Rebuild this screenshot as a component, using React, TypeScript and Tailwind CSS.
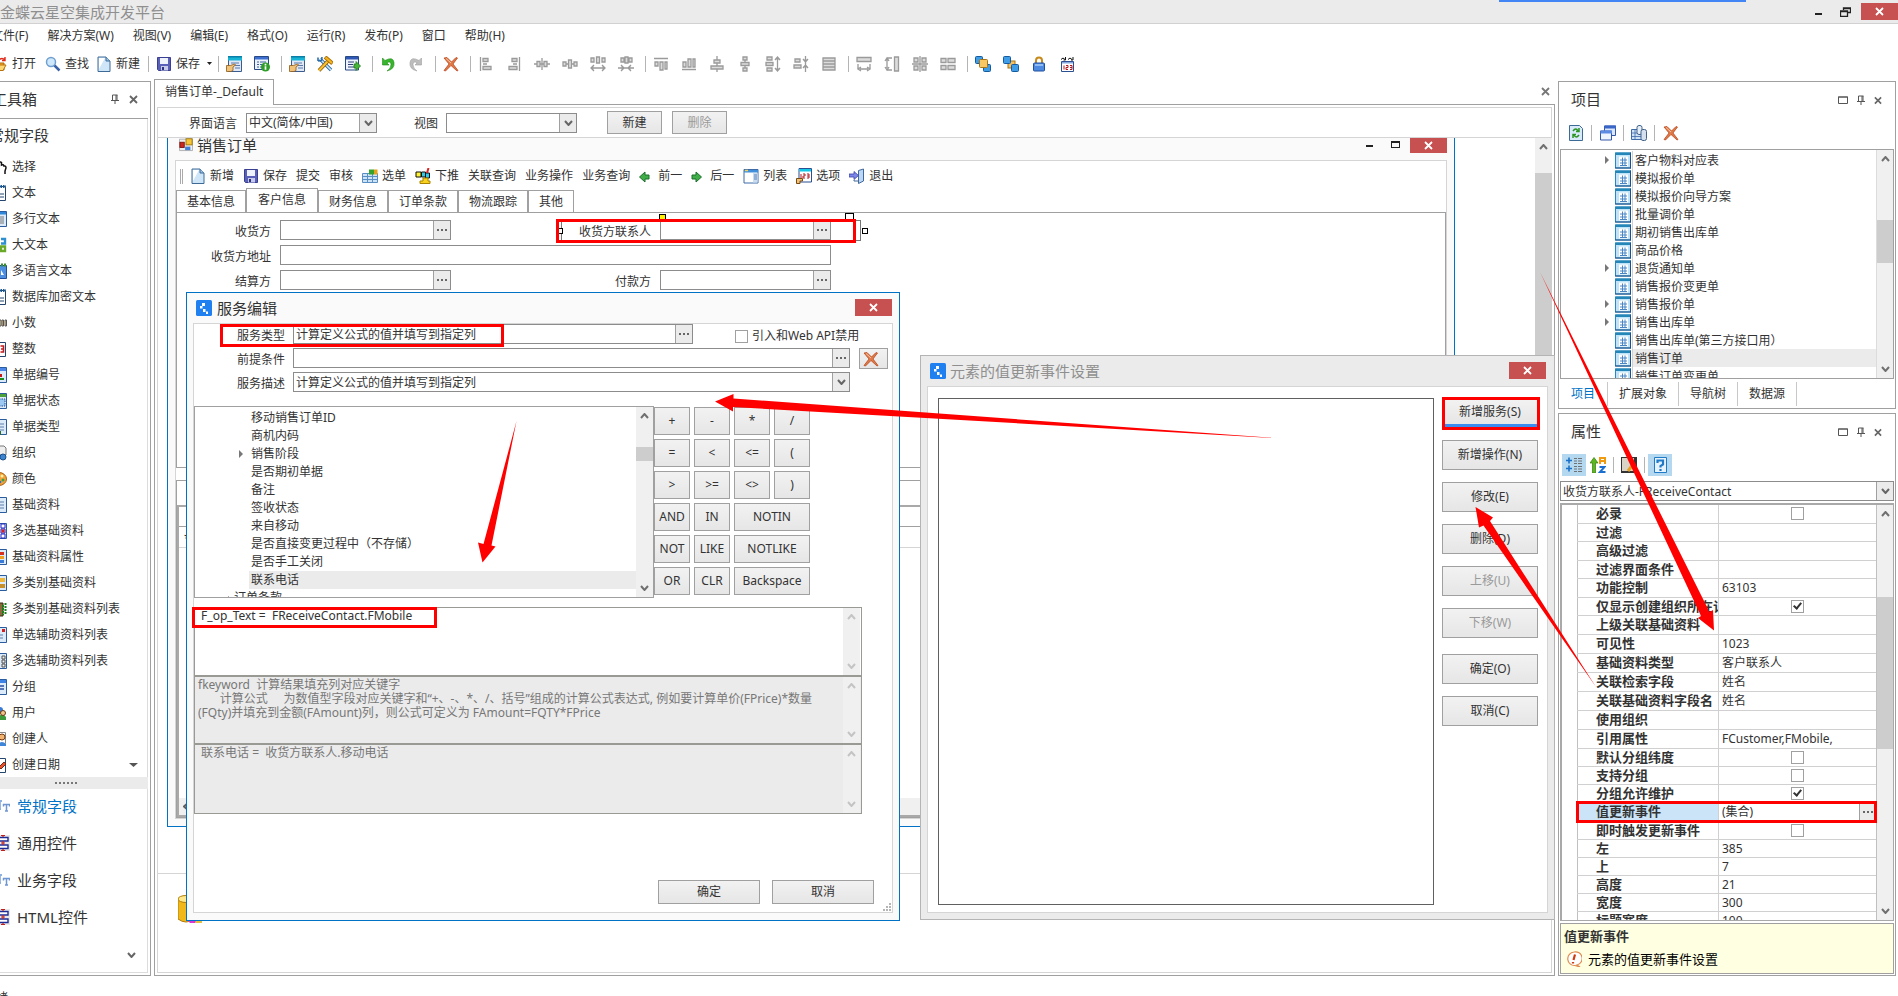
import * as React from "react"
import clsx from "clsx"

type IconProps = { className?: string }

function Svg({ className, children, box = "0 0 16 16" }: IconProps & { children: React.ReactNode; box?: string }) {
  return (
    <svg viewBox={box} className={clsx("shrink-0", className || "w-4 h-4")} aria-hidden="true">
      {children}
    </svg>
  )
}

/* ---------- icons ---------- */

const OpenIcon = () => (
  <Svg>
    <path d="M1 6h5l1 1h6v7H1z" fill="#f6a823" stroke="#a8660d" />
    <path d="M3 9h12l-3 5.500H1z" fill="#ffd873" stroke="#b8730f" />
    <path d="M8 4q3-3 6 0m0-3v3.500h-3" fill="none" stroke="#e02a1b" strokeWidth="1.400" />
  </Svg>
)
const FindIcon = () => (
  <Svg>
    <circle cx="6" cy="6" r="4.500" fill="#cfe8fb" stroke="#6f9fd0" strokeWidth="1.500" />
    <path d="M9.500 9.500l5 5" stroke="#3a62a8" strokeWidth="2.500" />
  </Svg>
)
const NewIcon = () => (
  <Svg>
    <path d="M2 1h8l4 4v10.500H2z" fill="#cfe5f8" stroke="#3e6a96" />
    <path d="M3 2h6l-6 11z" fill="#fff" />
    <path d="M10 1v4h4" fill="#9cc3e6" stroke="#3e6a96" />
  </Svg>
)
const SaveIcon = () => (
  <Svg>
    <path d="M1.500 1.500h13v13h-12l-1-1z" fill="#5a60b8" stroke="#3a3f90" />
    <path d="M4 2h8v6H4z" fill="#eef3fb" />
    <path d="M5 10h7v4.500H5z" fill="#c5cbe8" />
    <path d="M6 11h2v3H6z" fill="#2d3180" />
  </Svg>
)
const FormHandIcon = () => (
  <Svg>
    <path d="M2.500.5h13v15h-13z" fill="#dfe8f4" stroke="#3c5c90" />
    <path d="M2 0h14v4.500H2z" fill="#17b4d6" />
    <path d="M2 0h14v1.500H2z" fill="#0a7fa8" />
    <path d="M5 7h8M8 9.500h6M9 12h5" stroke="#5a7aac" />
    <path d="M.5 9.500h4l4-1.500 1 1-2.500 2v3.500l-2 1H.5z" fill="#f1c27a" stroke="#8a5a1a" strokeWidth=".8" />
  </Svg>
)
const FormInfoIcon = () => (
  <Svg>
    <path d="M.5.5h14v13H.5z" fill="#eef3fb" stroke="#274a86" />
    <path d="M1 1h13v2.500H1z" fill="#3c6fd0" />
    <path d="M3 6h2m1 0h6M3 8.500h2m1 0h4M3 11h2m1 0h3" stroke="#3a5f9c" />
    <circle cx="11.500" cy="11" r="4.500" fill="#2e9e28" />
    <path d="M11.500 7.800v1.600m0 .9v3.500" stroke="#fff" strokeWidth="1.700" />
  </Svg>
)
const ToolsIcon = () => (
  <Svg>
    <path d="M3 3l11 11" stroke="#2d6ea8" strokeWidth="3.400" />
    <path d="M3 3l11 11" stroke="#cfe8f8" strokeWidth="1.600" />
    <path d="M1 5V1.500M1 1.500M5 1L4.500 4.500 1 5" fill="none" stroke="#2d6ea8" strokeWidth="1.600" />
    <path d="M11.500 4.500L2 14.500" stroke="#8a5a0e" strokeWidth="3.600" />
    <path d="M11.500 4.500L2 14.500" stroke="#f9c22e" strokeWidth="2" />
    <path d="M8 1l7.500 6.500" stroke="#a8700a" strokeWidth="4" />
    <path d="M8.500 1.500l6.500 5.500" stroke="#f5b51f" strokeWidth="2.200" />
  </Svg>
)
const FormGoIcon = () => (
  <Svg>
    <path d="M.5.500h13v13.500H.5z" fill="#eef3fb" stroke="#274a86" />
    <path d="M1 1h12v2.500H1z" fill="#2f57b5" />
    <path d="M3 6h6M3 8.500h5M3 11h6" stroke="#2f3f7c" />
    <path d="M9 8h2V5.500l4.500 4.500-4.500 4.500V12H9z" fill="#45b53a" stroke="#1f7a1b" strokeWidth=".8" />
  </Svg>
)
const UndoIcon = () => (
  <Svg>
    <path d="M2.500 2v7H9L6.800 6.800Q11 4.500 11 8.500T7 15Q15 13 14 6.500T5 4.500z" fill="#37b52c" stroke="#1d8c16" strokeWidth=".6" />
  </Svg>
)
const RedoIcon = () => (
  <Svg>
    <path d="M13.500 2v7H7l2.200-2.200Q5 4.500 5 8.500T9 15Q1 13 2 6.500t9-2z" fill="#bdbdbd" stroke="#a0a0a0" strokeWidth=".6" />
  </Svg>
)
const DeleteIcon = () => (
  <Svg>
    <path d="M1 2l3-.5L8.500 6 13 1.500l1.500.5L10 8l5 6.500-1 .5L8 9.500 2.500 15 1 14.500 6 8z" fill="#e07a48" stroke="#b33c10" strokeWidth=".7" />
    <path d="M3 2.500l5 4.500" stroke="#f8c4a4" />
  </Svg>
)
const StackIcon = ({ back }: { back?: boolean }) => (
  <Svg>
    {back && <rect x="5" y="5" width="7" height="7" fill="#f5c262" stroke="#a97413" />}
    <rect x=".5" y=".5" width="7" height="7" rx="1" fill="#3f9de8" stroke="#155a9c" />
    <rect x="8.500" y="8.500" width="7" height="7" rx="1" fill="#3f9de8" stroke="#155a9c" />
    {!back && <rect x="4.500" y="3.500" width="8" height="8" rx="1" fill="#f8c766" stroke="#a97413" />}
  </Svg>
)
const LockIcon = () => (
  <Svg>
    <path d="M5 7V4.500q0-3 3-3t3 3V7" fill="none" stroke="#c68a1a" strokeWidth="2" />
    <rect x="2.500" y="7" width="11" height="8" rx="1" fill="#4c8be0" stroke="#1f4fa0" />
    <path d="M4 9h8" stroke="#a9ccf7" strokeWidth="1.500" />
  </Svg>
)
const OrderIcon = () => (
  <Svg>
    <path d="M2.500 5.500h12v10h-12z" fill="#fff" stroke="#2b4f92" />
    <path d="M3 6h11v1.500H3z" fill="#86a9de" />
    <path d="M2 3.500q2-3 4 0M9 3.500q2-3 4 0M6.500 1v3h-2M14 1v3h-2" fill="none" stroke="#111" />
    <path d="M5 9.500v4M7 9.500h2v2H7v2h2M11 9.500h2v4h-2m0-2h2" fill="none" stroke="#b4161b" />
  </Svg>
)

// greyed-out layout commands, one path per command
const layoutGlyphs: string[] = [
  "M2.500 1v14M5 2.500h5v3H5zM5 10.500h8v3H5zM5 8h4",
  "M13.500 1v14M6 2.500h5v3H6zM3 10.500h8v3H3zM7 8h4",
  "M3 5.500h3v5H3zM10 5.500h3v5h-3zM0 8h3M6 8h4M13 8h3M8 2v12",
  "M1 6h3v4H1zM6.500 4h3v8h-3zM12 6h3v4h-3zM4 8h2.500M9.500 8H12",
  "M1 2h3v4H1zM6.500 1h3v6h-3zM12 2h3v4h-3zM1 12h14M4 9l-3 3 3 3M12 9l3 3-3 3",
  "M3 2h3v4H3zM7 1h3v6H7zM11 2h3v4h-3zM0 12h16M3 9l3 3-3 3M13 9l-3 3 3 3",
]
const layoutGlyphs2: string[] = [
  "M1 2.500h14M2 6h3v4H2zM7 6h3v8H7zM12 6h2v7h-2z",
  "M1 13.500h14M2 6h3v5H2zM7 3h3v8H7zM12 3h2v8h-2z",
  "M5 4h6v3H5zM2 10h12v3H2zM8 0v4M8 7v3M8 13v3",
  "M6 1h4v3H6zM4 6.500h8v3H4zM6 12h4v3H6zM8 4v2.500M8 9.500V12",
  "M2 1h5v3H2zM1 6.500h7v3H1zM2 12h5v3H2zM12.500 1v14M10 4l2.500-3L15 4M10 12l2.500 3 2.500-3",
  "M2 3h5v3H2zM1 9h7v3H1zM12.500 0v16M10 3l2.500 3L15 3M10 12l2.500-3 2.500 3",
  "M2 2h12v12H2zM2 5h12M2 8h12M2 11h12",
]
const layoutGlyphs3: string[] = [
  "M1 1.500h14v4H1zM2 8v5M14 8v5M4 13h8M5 11l-3 2 3 2M11 11l3 2-3 2",
  "M10.500 1h4v14h-4zM3 2h5M3 14h5M3 4v8M1 5l2-3 2 3M1 11l2 3 2-3",
  "M2 2h4v4H2zM10 2h4v4h-4zM2 10h4v4H2zM10 10h4v4h-4zM8 0v16M0 8h16",
  "M1 2.500h5v4H1zM8 2.500h7v4H8zM1 9.500h5v4H1zM8 9.500h7v4H8z",
]
const GlyphIcon = ({ d }: { d: string }) => (
  <Svg>
    <path d={d} fill="#dcdcdc" stroke="#9a9a9a" strokeWidth="1.300" />
  </Svg>
)

const AppLogo = () => (
  <Svg>
    <rect width="16" height="16" rx="1.500" fill="#2080f0" />
    <path d="M6 3h3v3H6zM4 6h2.500v2.500H4zM7 9h2.500v3H7zM10 11.500h2V14h-2z" fill="#fff" />
  </Svg>
)
const WinFormIcon = () => (
  <Svg className="w-[14px] h-4">
    <path d="M.5 2.500h15v13H.5z" fill="#eee" stroke="#aaa" />
    <rect x="1" y="6" width="5" height="6" fill="#c8281e" stroke="#7c120c" />
    <rect x="8" y="2" width="7" height="7" fill="#f7c535" stroke="#96700a" />
    <rect x="7" y="11" width="6" height="4" fill="#4380d8" />
  </Svg>
)
const PickIcon = () => (
  <Svg>
    <path d="M.5 5.500h15v9H.5z" fill="#cfe3f7" stroke="#5a8fc4" />
    <path d="M.5 8.500h15M.5 11.500h15M5.500 5v9M10.500 5v9" stroke="#5a8fc4" />
    <rect x="7" y="1.500" width="5" height="5" fill="#34a32c" />
    <rect x="12" y="1.500" width="3.500" height="5" fill="#e3a31c" />
  </Svg>
)
const PushIcon = () => (
  <Svg>
    <path d="M1 4h5v5H1z" fill="#fff335" stroke="#111" />
    <path d="M6.500 4h4v5h-4zM10.500 5h4v5h-4z" fill="#35c8e8" stroke="#111" />
    <path d="M13.500 0l-1.500 5" stroke="#d22" strokeWidth="2" />
    <path d="M8 10h5v3h2v2.500H5V13h3z" fill="#f7d21f" stroke="#a88200" />
  </Svg>
)
const ArrowIcon = ({ right }: { right?: boolean }) => (
  <Svg className="w-[11px] h-4 mr-1" box="0 0 11 16">
    <path
      d={right ? "M1 7h4V4l5.500 5L5 14v-3H1z" : "M10 7H6V4L.5 9 6 14v-3h4z"}
      fill="#3fae49"
      stroke="#1c6e2a"
    />
  </Svg>
)
const ListIcon = () => (
  <Svg>
    <path d="M1 1.500h14v13.500H1z" fill="#fff" stroke="#3f6aa8" />
    <path d="M1 2h14v2.500H1z" fill="#3f8fdb" />
    <path d="M10 5h4.500v9.500H10z" fill="#c9dcf2" />
    <path d="M11 7h3M11 9h3M11 11h3" stroke="#5a82bb" />
    <path d="M2 2.500h3" stroke="#f8d24a" strokeWidth="1.500" />
  </Svg>
)
const OptionIcon = () => (
  <Svg>
    <path d="M3 .5h12.500V14H3z" fill="#fff" stroke="#2b4f92" />
    <path d="M3.500 1H15v2.500H3.500z" fill="#12c9e6" />
    <path d="M5 6v4M7 6h2v2H7v2h2M11 6h2v4h-2m0-2h2" fill="none" stroke="#b4161b" />
    <path d="M.5 10.500h6V13H4v2.500H.5z" fill="#f1c27a" stroke="#7a4a12" />
  </Svg>
)
const ExitIcon = () => (
  <Svg>
    <path d="M9.500 2.500l5-1.500v12l-5 2.500z" fill="#bcd7f3" stroke="#41689c" />
    <path d="M0 6h5V3.500L9.500 7.500 5 11.500V9H0z" fill="#7c86e8" stroke="#3942a8" strokeWidth=".8" />
    <path d="M9 13H5v-1" fill="none" stroke="#41689c" />
  </Svg>
)
const BillIcon = () => (
  <Svg className="w-4 h-[17px]">
    <path d="M.5.5h15v15H.5z" fill="#bfe3f8" stroke="#2a86bd" />
    <path d="M0 0h16v2.500H0z" fill="#2487b8" />
    <path d="M0 15.500h16M15.500 0v16" stroke="#1f4f86" />
    <path d="M4 4h9v10H4z" fill="#fff" />
    <path d="M5 7.500h7M5 10.500h7M5 13h7M7.500 5v8.500M10 5v8.500" stroke="#4a86c4" />
  </Svg>
)
const RefreshIcon = () => (
  <Svg>
    <path d="M1.500.5h10l3 3v12h-13z" fill="#d9ebfa" stroke="#3e6a96" />
    <path d="M5 6q3-4 5 0m1-3v3.500H8M11 10q-3 4-5 0m-1 3V9.500h3" fill="none" stroke="#2a9422" strokeWidth="1.500" />
  </Svg>
)
const WindowsIcon = () => (
  <Svg>
    <path d="M4.500 1h11v9.500h-11z" fill="#dce8fa" stroke="#3458a8" />
    <path d="M4.500.5h11.500v3H4.500z" fill="#3a66c8" />
    <path d="M.5 6h11v9H.5z" fill="#eef4fd" stroke="#3458a8" />
    <path d="M.5 5.500H12v3H.5z" fill="#5c8be4" />
  </Svg>
)
const DataIcon = () => (
  <Svg>
    <path d="M.5 4.500h10v10H.5z" fill="#cfe3f7" stroke="#3f6aa8" />
    <path d="M.5 8h10M.5 11.500h10M4 5v9" stroke="#3f6aa8" strokeWidth=".8" />
    <rect x="6" y=".5" width="5" height="9" rx="2" fill="#e6eef6" stroke="#41618a" />
    <rect x="10" y="4.500" width="5.500" height="11" rx="2" fill="#d4e0ee" stroke="#41618a" />
  </Svg>
)
const PinIcon = () => (
  <Svg className="w-[8px] h-[10px]" box="0 0 8 10">
    <path d="M1.500 1h5M1.500 1v5M6 1v5M5 1v5M0 6.500h8M4 6.500V10" fill="none" stroke="#555" />
  </Svg>
)
const SmallX = ({ className }: IconProps) => (
  <Svg className={className || "w-[9px] h-[9px]"} box="0 0 9 9">
    <path d="M1 1l7 7M8 1L1 8" stroke="currentColor" strokeWidth="1.800" />
  </Svg>
)
const BoxIcon = () => (
  <Svg className="w-[10px] h-[8px]" box="0 0 10 8">
    <path d="M.5 1h9v6.500h-9zM0 1h10" fill="none" stroke="#555" />
  </Svg>
)
const Chevron = ({ up, className }: IconProps & { up?: boolean }) => (
  <Svg className={clsx("w-[9px] h-[6px]", className)} box="0 0 9 6">
    <path d={up ? "M1 5l3.500-4L8 5" : "M1 1l3.500 4L8 1"} fill="none" stroke="currentColor" strokeWidth="2" />
  </Svg>
)

/* ---------- shared controls ---------- */

const face = "bg-linear-to-b from-[#f2f2f2] to-[#e6e6e6] border border-[#a0a0a0]"

function PushButton({ className, children, disabled }: { className?: string; children: React.ReactNode; disabled?: boolean }) {
  return (
    <button
      disabled={disabled}
      className={clsx("flex items-center justify-center", face, disabled && "text-[#9a9a9a]", className)}
    >
      {children}
    </button>
  )
}

function CloseButton({ className }: { className: string }) {
  return (
    <button aria-label="关闭" className={clsx("w-[37px] flex items-center justify-center bg-[#c75050] text-white", className)}>
      <SmallX />
    </button>
  )
}

function LookupInput({ id, value = "", className }: { id: string; value?: string; className?: string }) {
  return (
    <div className={clsx("flex h-5 border border-[#8c8c8c] bg-white", className)}>
      <input id={id} defaultValue={value} className="flex-1 min-w-0 px-[2px] pt-px outline-none" />
      <button aria-label="选择" className="w-[17px] flex items-center justify-center gap-[2px] bg-[#ebebeb] border-l border-[#a0a0a0]">
        <i className="size-[2px] bg-[#666]" />
        <i className="size-[2px] bg-[#666]" />
        <i className="size-[2px] bg-[#666]" />
      </button>
    </div>
  )
}

function DropDown({ id, value = "", className }: { id: string; value?: string; className?: string }) {
  return (
    <div className={clsx("relative h-5 border border-[#8c8c8c] bg-white", className)}>
      <select id={id} className="w-full h-full appearance-none pl-[2px] pr-5 pt-px leading-4 outline-none">
        <option>{value}</option>
      </select>
      <span className="absolute right-0 inset-y-0 w-[17px] flex items-center justify-center bg-[#ebebeb] border-l border-[#a0a0a0] text-[#666] pointer-events-none">
        <Chevron />
      </span>
    </div>
  )
}

function ScrollBar({ thumb, light, className }: { thumb?: string; light?: boolean; className?: string }) {
  return (
    <div
      className={clsx(
        "relative w-[17px] shrink-0 flex flex-col items-center justify-between py-[6px] bg-[#f0f0f0]",
        light ? "text-[#c4c4c4]" : "text-[#707070]",
        className
      )}
    >
      {thumb && <div className={clsx("absolute inset-x-0 bg-[#cdcdcd]", thumb)} />}
      <Chevron up />
      <Chevron />
    </div>
  )
}

const Sep = () => <span className="w-px h-4 -ml-px mr-[7px] bg-[#b4b4b4]" />

function IconButton({ label, children }: { label: string; children: React.ReactNode }) {
  return (
    <button aria-label={label} className="mr-3">
      {children}
    </button>
  )
}

/* ---------- top of the window ---------- */

const menus = ["文件(F)", "解决方案(W)", "视图(V)", "编辑(E)", "格式(O)", "运行(R)", "发布(P)", "窗口", "帮助(H)"]

function TitleBar() {
  return (
    <header className="h-6 shrink-0 flex justify-between bg-[#ebebeb] border-b border-[#d1d1d1]">
      <h1 className="text-[15px] leading-6 text-[#8f8f8f]">金蝶云星空集成开发平台</h1>
      <div className="absolute left-[79%] w-[247px] h-[2px] bg-[#4285f4]" />
      <div className="flex">
        <button aria-label="最小化" className="w-6 flex items-center justify-center">
          <i className="mt-1 w-[7px] h-[2px] bg-[#222]" />
        </button>
        <button aria-label="还原" className="w-[31px] flex items-center justify-center">
          <Svg className="w-[11px] h-[10px]" box="0 0 11 10">
            <path d="M3.500 3V1h7v4.500H8M3 1.500h8M.5 4h7v5.500h-7zM0 4.500h8" fill="none" stroke="#222" strokeWidth="1.300" />
          </Svg>
        </button>
        <CloseButton className="mt-[3px] h-[17px]" />
      </div>
    </header>
  )
}

function MainToolbar() {
  return (
    <div className="h-[31px] shrink-0 flex items-center -ml-[9px] overflow-hidden whitespace-nowrap">
      <button className="flex items-center gap-[5px] mr-[9px]"><OpenIcon />打开</button>
      <button className="flex items-center gap-[4px] mr-[7px]"><FindIcon />查找</button>
      <button className="flex items-center gap-[4px] mr-[9px]"><NewIcon />新建</button>
      <Sep />
      <button className="flex items-center gap-[4px] mr-3">
        <SaveIcon />保存
        <Svg className="ml-[3px] w-[5px] h-[3px]" box="0 0 5 3"><path d="M0 0h5L2.500 3z" fill="#222" /></Svg>
      </button>
      <span className="w-px h-4 -ml-[6px] mr-[7px] bg-[#b4b4b4]" />
      <IconButton label="表单"><FormHandIcon /></IconButton>
      <IconButton label="表单信息"><FormInfoIcon /></IconButton>
      <Sep />
      <IconButton label="属性"><FormHandIcon /></IconButton>
      <IconButton label="工具"><ToolsIcon /></IconButton>
      <IconButton label="导出"><FormGoIcon /></IconButton>
      <Sep />
      <IconButton label="撤销"><UndoIcon /></IconButton>
      <IconButton label="重做"><RedoIcon /></IconButton>
      <Sep />
      <IconButton label="删除"><DeleteIcon /></IconButton>
      <Sep />
      {layoutGlyphs.map((d) => <IconButton key={d} label="对齐"><GlyphIcon d={d} /></IconButton>)}
      <Sep />
      {layoutGlyphs2.map((d) => <IconButton key={d} label="间距"><GlyphIcon d={d} /></IconButton>)}
      <Sep />
      {layoutGlyphs3.map((d) => <IconButton key={d} label="尺寸"><GlyphIcon d={d} /></IconButton>)}
      <Sep />
      <IconButton label="置前"><StackIcon /></IconButton>
      <IconButton label="置后"><StackIcon back /></IconButton>
      <IconButton label="锁定"><LockIcon /></IconButton>
      <IconButton label="顺序"><OrderIcon /></IconButton>
    </div>
  )
}

/* ---------- left toolbox ---------- */

const page = <path d="M.5 1.500h14v14H.5z" fill="#fff" stroke="#24466e" />
const bluePage = <path d="M.5.5h15v15H.5z" fill="#dcebfa" stroke="#2a5c9e" />
const lines = <path d="M3 5h10M3 8h10M3 11h10" stroke="#5d7fa8" />

const toolItems: { name: string; icon: React.ReactNode }[] = [
  { name: "选择", icon: <path d="M7 15l-2-4V6.500Q6 5 8 6V3.500q1.500-1 2.500 0V6q2-1 2.500 1 2-.5 2 2l-1 3v3" fill="#fff" stroke="#111" strokeWidth="1.500" /> },
  { name: "文本", icon: <>{page}<path d="M2 1.500h13" stroke="#1c5a96" strokeWidth="3" strokeDasharray="1.500 1" /><path d="M3 9h10M3 12h10" stroke="#24466e" /></> },
  { name: "多行文本", icon: <>{bluePage}<path d="M1 1h14v2.500H1z" fill="#2f86d8" /><path d="M3 6h10M3 8h10M3 10h10M3 12h10" stroke="#777" /></> },
  { name: "大文本", icon: <><path d="M10 2h4v4.500h-4M14 4.500" fill="none" stroke="#2d8fd0" strokeWidth="2.400" /><path d="M10 9.500h4V14h-4z" fill="none" stroke="#6aa82a" strokeWidth="2.400" /></> },
  { name: "多语言文本", icon: <><path d="M.5 2.500h15v13H.5z" fill="#4f8fe0" stroke="#1f4f96" /><path d="M1 2h14" stroke="#3c8d2e" strokeWidth="3" strokeDasharray="2 1" /><path d="M10 12V7l3 5z" fill="#fff" /></> },
  { name: "数据库加密文本", icon: <>{page}<path d="M2 1.500h13" stroke="#1c5a96" strokeWidth="3" strokeDasharray="1.500 1" /><path d="M3 9h10M3 12h10" stroke="#24466e" /></> },
  { name: "小数", icon: <path d="M8 5h2v6H8zM11 5h1.500v6H11zM14 5h1.500v6H14z" fill="#f3d38a" stroke="#555" /> },
  { name: "整数", icon: <>{page}<path d="M9.500 5h3v3h-2.500M12.500 8v3H9.500" fill="none" stroke="#c01c1c" strokeWidth="1.600" /></> },
  { name: "单据编号", icon: <>{bluePage}<path d="M1 1h14v3H1z" fill="#4c86e6" /><path d="M9 7h2v3H9z" fill="#c81818" /><path d="M9 12h4" stroke="#1a8a1a" strokeWidth="2" /></> },
  { name: "单据状态", icon: <>{bluePage}<path d="M1 1h14v3H1z" fill="#4ca03a" /><path d="M8 6h6v7H8z" fill="#9cc8f4" stroke="#1f4f96" strokeDasharray="1.500 1" /></> },
  { name: "单据类型", icon: <>{bluePage}{lines}<path d="M7 12h3v4H7z" fill="#2c6b2c" /></> },
  { name: "组织", icon: <><path d="M8 1h5l2 2v7H8z" fill="#eee" stroke="#777" /><circle cx="12" cy="12" r="3" fill="#3d84d0" stroke="#1c4e8c" /></> },
  { name: "颜色", icon: <><ellipse cx="8" cy="8" rx="7.500" ry="6.500" fill="#f3a23a" stroke="#a8600e" /><circle cx="11" cy="5" r="1.500" fill="#fff2a8" /><circle cx="12" cy="9" r="1.500" fill="#3aa04a" /><circle cx="9" cy="11" r="1.300" fill="#2a6cd0" /></> },
  { name: "基础资料", icon: <>{bluePage}{lines}</> },
  { name: "多选基础资料", icon: <>{bluePage}<path d="M10 1h4v4h-4zM10 6h4v4h-4zM10 11h4v4h-4z" fill="#fff" stroke="#2626c8" /><path d="M10.500 6.500h3v3h-3z" fill="#d02020" /></> },
  { name: "基础资料属性", icon: <>{bluePage}<path d="M8 3h5v3H8z" fill="#d83020" /><path d="M8 7h5v3H8z" fill="#f0a020" /><path d="M8 11h5v3H8z" fill="#3a7bd8" /></> },
  { name: "多类别基础资料", icon: <>{bluePage}<path d="M9 3h5v4H9z" fill="#f0b83a" /><path d="M9 9h5v4H9z" fill="#c8902a" /></> },
  { name: "多类别基础资料列表", icon: <><path d="M7 2h5v13H7z" fill="#8a6a3a" stroke="#3a2a10" /><path d="M12 4v10M14.500 2v12" stroke="#18801c" strokeWidth="2" strokeDasharray="2 1" /></> },
  { name: "单选辅助资料列表", icon: <>{bluePage}<path d="M11 2h3v3h-3z" fill="#d02020" /><path d="M3 8h9M3 11h9" stroke="#5d7fa8" /></> },
  { name: "多选辅助资料列表", icon: <>{bluePage}<path d="M11 3h3v3h-3zM11 7h3v3h-3zM11 11h3v3h-3z" fill="#eee" stroke="#555" /></> },
  { name: "分组", icon: <>{bluePage}<path d="M1 1h14v3H1z" fill="#3d84e6" /><path d="M3 7h10M3 10h10" stroke="#2a4fa0" strokeWidth="1.500" /></> },
  { name: "用户", icon: <><circle cx="9" cy="5" r="3" fill="#3a7bd8" /><path d="M7 12q5-5 8 0v3H7z" fill="#3c9a3a" /><circle cx="12" cy="8" r="2.500" fill="#f1c48a" stroke="#6a3a12" /></> },
  { name: "创建人", icon: <><path d="M3.500 1.500h11v11h-11z" fill="#fff" stroke="#888" /><circle cx="11" cy="6" r="3" fill="#f2b470" stroke="#7a3a10" /><path d="M7 13q4-4 8 0v2H7z" fill="#3f86d8" /></> },
  { name: "创建日期", icon: <>{page}<path d="M8 10l5-5 2 2-5 5z" fill="#e8522a" stroke="#7a2a10" /></> },
]

const FieldIcon = () => (
  <Svg className="w-[18px] h-4" box="0 0 18 16">
    <path d="M4 3h6M8 3v8M7 11h2" stroke="#8fb1e0" strokeWidth="1.800" />
    <path d="M11 6.500h7M11.500 6v2.500M17.500 6v2.500M14.500 6v7M13 13h3" stroke="#6f96d0" strokeWidth="1.500" />
  </Svg>
)
const ControlIcon = () => (
  <Svg className="w-[18px] h-4" box="0 0 18 16">
    <path d="M0 0h18v16H0z" fill="#e8e8ec" />
    <path d="M4 2.500h12v3.500H4zM4 10h12v3.500H4z" fill="#fff" stroke="#1c2c94" strokeWidth="1.400" />
    <path d="M11 0v2M11 6v4M11 14v2M9 8h4M9 .5h4M9 15.500h4" stroke="#c02020" strokeWidth="1.200" />
  </Svg>
)

const toolGroups = [
  { name: "常规字段", icon: <FieldIcon />, active: true },
  { name: "通用控件", icon: <ControlIcon /> },
  { name: "业务字段", icon: <FieldIcon /> },
  { name: "HTML控件", icon: <ControlIcon /> },
]

function Toolbox() {
  return (
    <aside className="w-[151px] shrink-0 mt-[2px] flex flex-col border border-l-0 border-[#a0a0a0] overflow-hidden pr-[2px] pb-[2px]">
      <div className="h-[37px] shrink-0 flex items-center pb-[2px] border-b border-[#a0a0a0]">
        <h2 className="-ml-2 text-[15px] flex-1">工具箱</h2>
        <PinIcon />
        <button aria-label="关闭工具箱" className="ml-[10px] mr-[10px] text-[#666]"><SmallX /></button>
      </div>
      <div className="border-r border-[#dcdcdc]">
        <h3 className="h-[34px] -ml-[11px] text-[15px] leading-8">常规字段</h3>
        <ul>
          {toolItems.map((item, i) => (
            <li key={item.name} className="h-[26px] flex items-center gap-[5px] pt-[2px] -ml-[9px]">
              <Svg>{item.icon}</Svg>
              <span className="flex-1">{item.name}</span>
              {i === toolItems.length - 1 && (
                <Svg className="w-[9px] h-[4px] mr-[9px]" box="0 0 9 4"><path d="M0 0h9L4.500 4z" fill="#555" /></Svg>
              )}
            </li>
          ))}
        </ul>
      </div>
      <div className="h-3 shrink-0 flex items-center justify-center gap-[2px] pr-4 bg-[#ebebeb]">
        {[0, 1, 2, 3, 4, 5].map((n) => <i key={n} className="size-[2px] bg-[#777]" />)}
      </div>
      <div className="flex-1 border-r border-b border-[#dcdcdc]">
        {toolGroups.map((g) => (
          <button
            key={g.name}
            className={clsx("h-[37px] w-full -ml-2 pb-[3px] flex items-center gap-[7px] text-[15px]", g.active && "text-[#0072c6]")}
          >
            {g.icon}
            {g.name}
          </button>
        ))}
        <div className="flex justify-end pr-[11px] pt-[15px] text-[#666]"><Chevron /></div>
      </div>
    </aside>
  )
}

/* ---------- designer in the middle ---------- */

const formTabs = ["基本信息", "客户信息", "财务信息", "订单条款", "物流跟踪", "其他"]

const formTools: { name: string; icon?: React.ReactNode }[] = [
  { name: "新增", icon: <NewIcon /> },
  { name: "保存", icon: <SaveIcon /> },
  { name: "提交" },
  { name: "审核" },
  { name: "选单", icon: <PickIcon /> },
  { name: "下推", icon: <PushIcon /> },
  { name: "关联查询" },
  { name: "业务操作" },
  { name: "业务查询" },
  { name: "前一", icon: <ArrowIcon /> },
  { name: "后一", icon: <ArrowIcon right /> },
  { name: "列表", icon: <ListIcon /> },
  { name: "选项", icon: <OptionIcon /> },
  { name: "退出", icon: <ExitIcon /> },
]

function FormLabel({ htmlFor, children }: { htmlFor: string; children: React.ReactNode }) {
  return <label htmlFor={htmlFor} className="text-right leading-6 h-5">{children}</label>
}

function SalesOrderForm() {
  return (
    <section className="flex-1 min-w-0 ml-[9px] mr-20 mb-[46px] flex flex-col px-[7px] pb-[7px] bg-[#fafafa] border border-t-0 border-[#0072c6]">
      <div className="h-[22px] shrink-0 flex items-start">
        <span className="ml-1 mr-[4px] -mt-[2px]"><WinFormIcon /></span>
        <h2 className="flex-1 text-[15px] leading-[14px]">销售订单</h2>
        <button aria-label="最小化" className="mt-[7px] mr-[18px]"><i className="block w-[7px] h-[2px] bg-[#222]" /></button>
        <button aria-label="最大化" className="mt-[3px] mr-[10px] w-[9px] h-[7px] border border-t-2 border-[#222]" />
        <CloseButton className="h-[15px]" />
      </div>
      <div className="flex-1 flex flex-col bg-white border border-[#d5d5d5]">
        <div className="h-[27px] shrink-0 flex items-center gap-[9px] pl-1 pt-[3px] whitespace-nowrap">
          <span className="w-[3px] h-[15px] mr-[-2px] border-x border-[#aaa]" />
          {formTools.map((t) => (
            <button key={t.name} className="flex items-center gap-[4px]">{t.icon}{t.name}</button>
          ))}
        </div>
        <div className="h-6 shrink-0 flex items-end" role="tablist">
          {formTabs.map((t) => (
            <button
              key={t}
              role="tab"
              className={clsx(
                "border border-b-0 border-[#a0a0a0]",
                t === "客户信息" ? "h-[25px] -mb-px px-[11px] pb-[3px] bg-white" : "h-[22px] px-[10px]"
              )}
            >
              {t}
            </button>
          ))}
        </div>
        <div className="h-[256px] shrink-0 pt-[7px] border border-[#a0a0a0]">
          <div className="relative grid grid-cols-[94px_171px_191px_171px] auto-rows-[20px] gap-x-[9px] gap-y-[5px]">
            <FormLabel htmlFor="receiver">收货方</FormLabel>
            <LookupInput id="receiver" />
            <FormLabel htmlFor="contact">收货方联系人</FormLabel>
            <LookupInput id="contact" />
            <FormLabel htmlFor="address">收货方地址</FormLabel>
            <input id="address" className="col-span-3 border border-[#8c8c8c] outline-none" />
            <FormLabel htmlFor="settle">结算方</FormLabel>
            <LookupInput id="settle" />
            <FormLabel htmlFor="payer">付款方</FormLabel>
            <LookupInput id="payer" />
            {/* selection frame with its grips */}
            <div className="absolute left-[384px] top-0 w-[300px] h-[21px] border border-[#777]">
              <i className="absolute -left-[5px] top-[7px] size-[6px] border border-black bg-white" />
              <i className="absolute left-[97px] -top-[7px] size-[7px] border border-black bg-[#ffef00]" />
              <i className="absolute right-[6px] -top-[8px] size-[9px] border border-black bg-white" />
              <i className="absolute -right-[8px] top-[7px] size-[6px] border border-black bg-white" />
            </div>
          </div>
        </div>
        <div className="mt-3 flex-1 flex flex-col border border-[#a0a0a0]">
          <div className="h-6 shrink-0" />
          <div className="flex-1 flex flex-col border-2 border-[#a9a9a9]">
            <div className="h-5 border-b border-[#a0a0a0]" />
            <div className="h-[21px] pl-[5px] border-b border-[#d5d5d5] leading-6">*</div>
            <div className="mt-auto h-[17px] flex items-center bg-[#f0f0f0] pl-1 text-[#606060]">
              <Svg className="w-[6px] h-[9px]" box="0 0 6 9"><path d="M5 1L1 4.500 5 8" fill="none" stroke="currentColor" strokeWidth="2" /></Svg>
            </div>
          </div>
        </div>
      </div>
    </section>
  )
}

function Designer() {
  return (
    <main className="flex-1 min-w-0 flex flex-col">
      <div className="h-[25px] shrink-0 flex items-center">
        <button className="h-[26px] -mb-px px-[10px] pb-px bg-white border border-b-0 border-[#a0a0a0] relative">销售订单-_Default</button>
        <button aria-label="关闭页签" className="ml-auto mr-[5px] text-[#777]"><SmallX /></button>
      </div>
      <div className="flex-1 min-h-0 flex flex-col p-[2px] border border-[#a0a0a0]">
        <div className="h-[31px] shrink-0 flex items-center border border-[#d5d5d5] pl-[31px]">
          <label htmlFor="lang" className="mr-[9px] pt-[2px]">界面语言</label>
          <DropDown id="lang" value="中文(简体/中国)" className="w-[131px]" />
          <label htmlFor="view" className="ml-[37px] mr-[8px] pt-[2px]">视图</label>
          <DropDown id="view" className="w-[131px]" />
          <PushButton className="ml-[30px] w-[55px] h-[23px]">新建</PushButton>
          <PushButton disabled className="ml-[10px] w-[55px] h-[23px]">删除</PushButton>
        </div>
        <div className="flex-1 min-h-0 flex border-l border-[#d5d5d5]">
          <SalesOrderForm />
          <ScrollBar thumb="top-[35px] bottom-[17px]" className="w-4" />
        </div>
        <div className="h-[100px] shrink-0 border border-[#d5d5d5] pl-[20px] pt-[21px]">
          <Svg className="w-6 h-7" box="0 0 24 28">
            <path d="M0 4v20q8 6 16 0V4z" fill="#f0b818" stroke="#b07c08" />
            <ellipse cx="8" cy="4" rx="8" ry="3.500" fill="#ffe98a" stroke="#b07c08" />
            <path d="M8 24l6-6 7 7-4 3h-5z" fill="#d838d8" />
            <path d="M19 22h5v6h-7z" fill="#e8c040" />
          </Svg>
        </div>
      </div>
    </main>
  )
}

/* ---------- right docks ---------- */

const projectNodes: { name: string; more?: boolean; selected?: boolean }[] = [
  { name: "客户物料对应表", more: true },
  { name: "模拟报价单" },
  { name: "模拟报价向导方案" },
  { name: "批量调价单" },
  { name: "期初销售出库单" },
  { name: "商品价格" },
  { name: "退货通知单", more: true },
  { name: "销售报价变更单" },
  { name: "销售报价单", more: true },
  { name: "销售出库单", more: true },
  { name: "销售出库单(第三方接口用）" },
  { name: "销售订单", selected: true },
  { name: "销售订单变更单" },
]

const Triangle = () => (
  <Svg className="w-[4px] h-[8px]" box="0 0 4 8"><path d="M0 0l4 4-4 4z" fill="#777" /></Svg>
)

function DockHeader({ title }: { title: string }) {
  return (
    <div className="h-9 shrink-0 flex items-center pl-[11px] pr-3 pb-[2px]">
      <h2 className="flex-1 text-[15px]">{title}</h2>
      <span className="flex items-center gap-[9px] pt-[2px] text-[#666]">
        <BoxIcon />
        <PinIcon />
        <button aria-label={"关闭" + title}><SmallX className="w-[8px] h-[9px]" /></button>
      </span>
    </div>
  )
}

function ProjectDock() {
  return (
    <section className="h-[328px] shrink-0 flex flex-col border border-[#a0a0a0] px-px">
      <DockHeader title="项目" />
      <div className="h-[31px] shrink-0 flex items-center pl-2 pb-px">
        <IconButton label="刷新"><RefreshIcon /></IconButton>
        <span className="w-px h-4 -ml-[5px] mr-2 bg-[#b4b4b4]" />
        <IconButton label="窗口"><WindowsIcon /></IconButton>
        <span className="w-px h-4 -ml-[5px] mr-[7px] bg-[#b4b4b4]" />
        <IconButton label="数据"><DataIcon /></IconButton>
        <span className="w-px h-4 -ml-[5px] mr-2 bg-[#b4b4b4]" />
        <IconButton label="移除"><DeleteIcon /></IconButton>
      </div>
      <div className="flex-1 min-h-0 flex border border-[#a0a0a0]">
        <ul className="flex-1 min-w-0 pt-px overflow-hidden">
          {projectNodes.map((n) => (
            <li key={n.name} className="h-[18px] flex items-center">
              <span className="w-[54px] pl-[44px]">{n.more && <Triangle />}</span>
              <BillIcon />
              <span className={clsx("flex-1 h-[18px] leading-[19px] ml-px pl-[2px] border-l border-[#d0d0d0]", n.selected && "bg-[#ebebeb]")}>
                {n.name}
              </span>
            </li>
          ))}
        </ul>
        <ScrollBar thumb="top-[70px] h-[43px]" className="border-l border-[#dcdcdc]" />
      </div>
      <div className="h-[29px] shrink-0 flex items-start pt-[3px]" role="tablist">
        {["项目", "扩展对象", "导航树", "数据源"].map((t) => (
          <button
            key={t}
            role="tab"
            className={clsx("h-6 px-[11px] border-r border-[#c8c8c8]", t === "项目" && "pr-3 text-[#0072c6]")}
          >
            {t}
          </button>
        ))}
      </div>
    </section>
  )
}

type Prop = { name: string; value?: string; check?: boolean; tall?: boolean; selected?: boolean }

const properties: Prop[] = [
  { name: "必录", check: false },
  { name: "过滤" },
  { name: "高级过滤", tall: true },
  { name: "过滤界面条件" },
  { name: "功能控制", value: "63103", tall: true },
  { name: "仅显示创建组织所在记录", check: true },
  { name: "上级关联基础资料", tall: true },
  { name: "可见性", value: "1023", tall: true },
  { name: "基础资料类型", value: "客户联系人", tall: true },
  { name: "关联检索字段", value: "姓名", tall: true },
  { name: "关联基础资料字段名", value: "姓名", tall: true },
  { name: "使用组织", tall: true },
  { name: "引用属性", value: "FCustomer,FMobile,", tall: true },
  { name: "默认分组纬度", check: false },
  { name: "支持分组", check: false },
  { name: "分组允许维护", check: true },
  { name: "值更新事件", value: "(集合)", tall: true, selected: true },
  { name: "即时触发更新事件", check: false },
  { name: "左", value: "385" },
  { name: "上", value: "7" },
  { name: "高度", value: "21" },
  { name: "宽度", value: "300" },
  { name: "标题宽度", value: "100" },
]

const checkBox =
  "block size-[13px] appearance-none border border-[#a0a0a0] bg-white relative checked:after:absolute checked:after:left-[3px] checked:after:top-0 checked:after:w-[5px] checked:after:h-[8px] checked:after:border-r-2 checked:after:border-b-2 checked:after:border-[#333] checked:after:rotate-40"

function PropertyGrid() {
  return (
    <div className="flex-1 min-h-0 flex mt-[2px] border-2 border-[#a9a9a9] border-r border-b">
      <div className="flex-1 min-w-0 overflow-hidden pl-[15px]">
        <table className="w-full table-fixed border-collapse border-l border-[#c0c0c0]">
          <tbody>
            {properties.map((p) => (
              <tr key={p.name} className={clsx("border-b border-[#d0d0d0]", p.tall ? "h-[19px]" : "h-[18px]")}>
                <th
                  scope="row"
                  className={clsx(
                    "w-[141px] p-0 pl-[18px] text-left text-[13px] leading-[17px] font-bold whitespace-nowrap overflow-hidden border-r border-[#d0d0d0]",
                    p.selected && "bg-[#cce4f7]"
                  )}
                >
                  {p.name}
                </th>
                <td className="p-0 pl-[3px] leading-[17px]">
                  {p.check !== undefined && (
                    <input type="checkbox" aria-label={p.name} defaultChecked={p.check} className={clsx(checkBox, "ml-[69px]")} />
                  )}
                  {p.selected ? (
                    <span className="flex justify-between">
                      {p.value}
                      <button aria-label="编辑" className="w-[17px] flex items-center justify-center gap-[2px] bg-[#ebebeb] border-l border-[#a0a0a0]">
                        <i className="size-[2px] bg-[#666]" />
                        <i className="size-[2px] bg-[#666]" />
                        <i className="size-[2px] bg-[#666]" />
                      </button>
                    </span>
                  ) : (
                    p.value
                  )}
                </td>
              </tr>
            ))}
          </tbody>
        </table>
      </div>
      <ScrollBar thumb="top-[92px] h-[152px]" className="border-l border-[#c0c0c0]" />
    </div>
  )
}

function PropertyDock() {
  return (
    <section className="flex-1 min-h-0 mt-1 flex flex-col border border-[#a0a0a0] p-px pt-0">
      <DockHeader title="属性" />
      <div className="h-[31px] shrink-0 flex items-center pl-[2px] pb-px">
        <button aria-label="分类" className="w-6 h-[22px] flex items-center justify-center bg-[#b4d8f0]">
          <Svg>
            <path d="M0 3.500h6M3 .5v6M0 11.500h6M3 8.500v6" stroke="#1a73c8" strokeWidth="1.600" />
            <path d="M8 1.500h3M12 1.500h4M8 4h3M12 4h4M8 6.500h3M12 6.500h4M8 9.500h3M12 9.500h4M8 12h3M12 12h4M8 14.500h3M12 14.500h4" stroke="#666" strokeWidth=".9" />
          </Svg>
        </button>
        <button aria-label="排序" className="ml-1">
          <Svg>
            <path d="M2.500 16V6H0l4-5.500L8 6H5.500v10z" fill="#5cb81e" stroke="#347c0a" strokeWidth=".7" />
            <path d="M10 7V1h5v6M10 4h5" fill="none" stroke="#f09a10" strokeWidth="2" />
            <path d="M9.500 10h5l-4.500 5h5.500" fill="none" stroke="#1a6fd0" strokeWidth="2" />
          </Svg>
        </button>
        <span className="w-px h-4 mx-[7px] bg-[#b4b4b4]" />
        <button aria-label="属性页">
          <Svg>
            <path d="M0 0h16v16H0z" fill="#333" />
            <path d="M1 1h12v13H1z" fill="#d9d4c6" />
            <path d="M7 14l6-8" stroke="#e8a020" strokeWidth="3" />
          </Svg>
        </button>
        <span className="w-px h-4 ml-[7px] mr-[3px] bg-[#b4b4b4]" />
        <button aria-label="说明" className="w-6 h-[22px] flex items-center justify-center bg-[#b4d8f0]">
          <Svg>
            <path d="M2.500.5h12v15h-12z" fill="#e6f3fd" stroke="#1f7ac8" />
            <path d="M5.500 6V3.500h5.500v4L8.500 9v1.500M8.500 12v2" fill="none" stroke="#1f7ac8" strokeWidth="2.200" />
          </Svg>
        </button>
      </div>
      <DropDown id="element" value="收货方联系人-FReceiveContact" className="shrink-0" />
      <PropertyGrid />
      <div className="h-[51px] shrink-0 mt-[2px] flex flex-col justify-around px-[3px] pb-[3px] bg-[#ffffe1] border border-[#a0a0a0] text-[13px]">
        <h3 className="font-bold leading-5">值更新事件</h3>
        <p className="flex items-center gap-[6px] pl-[2px] leading-5 text-black">
          <Svg>
            <path d="M8 1a6.500 6.500 0 1 1 3 13l3 2-5-1.500A6.500 6.500 0 0 1 8 1z" fill="#fff" stroke="#e08a50" strokeWidth="1.200" />
            <path d="M9 3.500L7.500 9M7 11v1.500" stroke="#d03a10" strokeWidth="2.200" />
          </Svg>
          元素的值更新事件设置
        </p>
      </div>
    </section>
  )
}

/* ---------- dialogs ---------- */

const treeFields = ["移动销售订单ID", "商机内码", "销售阶段", "是否期初单据", "备注", "签收状态", "来自移动", "是否直接变更过程中（不存储）", "是否手工关闭", "联系电话"]

const operators: [string, boolean?][] = [
  ["+"], ["-"], ["*"], ["/"],
  ["="], ["<"], ["<="], ["("],
  [">"], [">="], ["<>"], [")"],
  ["AND"], ["IN"], ["NOTIN", true],
  ["NOT"], ["LIKE"], ["NOTLIKE", true],
  ["OR"], ["CLR"], ["Backspace", true],
]

const helpText =
  "fkeyword  计算结果填充列对应关键字\n       计算公式     为数值型字段对应关键字和“+、-、*、/、括号”组成的计算公式表达式, 例如要计算单价(FPrice)*数量\n(FQty)并填充到金额(FAmount)列，则公式可定义为 FAmount=FQTY*FPrice"

function FormulaBox({ label, value, dim, className }: { label: string; value: string; dim?: boolean; className: string }) {
  return (
    <div className={clsx("w-[668px] shrink-0 flex pr-px border border-[#9a9a94]", dim ? "bg-[#ebebeb] text-[#777]" : "bg-white", className)}>
      <textarea
        aria-label={label}
        wrap="off"
        defaultValue={value}
        className="flex-1 min-w-0 resize-none overflow-hidden px-[3px] pt-px leading-[14px] outline-none"
      />
      <ScrollBar light />
    </div>
  )
}

function ServiceEditDialog() {
  return (
    <section role="dialog" aria-label="服务编辑" className="absolute left-[186px] top-[292px] w-[714px] h-[629px] flex flex-col px-[6px] pb-[7px] bg-[#fafafa] border border-[#0072c6]">
      <div className="h-[30px] shrink-0 flex items-center pl-[3px]">
        <AppLogo />
        <h2 className="flex-1 ml-[5px] text-[15px]">服务编辑</h2>
        <CloseButton className="h-[17px] mb-[2px] mr-px" />
      </div>
      <div className="relative flex-1 min-h-0 flex flex-col bg-white border border-[#d5d5d5]">
        <div className="grid grid-cols-[99px_1fr] gap-y-1 auto-rows-[20px]">
          <label htmlFor="svcType" className="pl-[43px] leading-6">服务类型</label>
          <div className="flex items-center">
            <LookupInput id="svcType" value="计算定义公式的值并填写到指定列" className="w-[400px]" />
            <label className="ml-[42px] flex items-center gap-[4px] pt-[4px]">
              <input type="checkbox" className={checkBox} />
              引入和Web API禁用
            </label>
          </div>
          <label htmlFor="svcCond" className="pl-[43px] leading-6">前提条件</label>
          <div className="flex items-start">
            <LookupInput id="svcCond" className="w-[557px]" />
            <button aria-label="清除" className={clsx("ml-[9px] w-[29px] h-[21px] flex items-center pl-[3px]", face)}>
              <DeleteIcon />
            </button>
          </div>
          <label htmlFor="svcDesc" className="pl-[43px] leading-6">服务描述</label>
          <DropDown id="svcDesc" value="计算定义公式的值并填写到指定列" className="w-[557px]" />
        </div>
        <div className="mt-[14px] flex">
          <div className="w-[460px] h-[192px] flex border border-[#a0a0a0]">
            <ul className="flex-1 min-w-0 overflow-hidden pt-[2px]">
              {treeFields.map((f) => (
                <li key={f} className="h-[18px] flex items-center pl-[44px]">
                  <span className="w-[10px]">{f === "销售阶段" && <Triangle />}</span>
                  <span className={clsx("flex-1 pl-[2px] leading-[18px]", f === "联系电话" && "bg-[#ebebeb]")}>{f}</span>
                </li>
              ))}
              <li className="h-[18px] flex items-center pl-[29px] gap-[5px]">
                <Svg className="w-[5px] h-[5px]" box="0 0 5 5"><path d="M5 0v5H0z" fill="#555" /></Svg>
                订单条款
              </li>
            </ul>
            <ScrollBar thumb="top-[40px] h-[14px]" />
          </div>
          <div className="grid grid-cols-[36px_36px_36px_36px] auto-rows-[28px] gap-[4px] pt-px">
            {operators.map(([op, wide]) => (
              <PushButton key={op} className={wide ? "col-span-2" : ""}>{op}</PushButton>
            ))}
          </div>
        </div>
        <div className="mt-[9px] flex flex-col">
          <FormulaBox label="公式" value=" F_op_Text =  FReceiveContact.FMobile" className="h-[69px]" />
          <FormulaBox label="说明" value={helpText} dim className="h-[68px]" />
          <FormulaBox label="翻译" value=" 联系电话 =  收货方联系人.移动电话" dim className="h-[70px]" />
        </div>
        <div className="mt-auto mb-2 mr-[18px] flex justify-end gap-3">
          <PushButton className="w-[102px] h-6">确定</PushButton>
          <PushButton className="w-[102px] h-6">取消</PushButton>
        </div>
        <Svg className="absolute right-0 bottom-0 w-[9px] h-[9px]" box="0 0 9 9">
          <path d="M6 0h2v2H6zM3 3h2v2H3zM6 3h2v2H6zM0 6h2v2H0zM3 6h2v2H3zM6 6h2v2H6z" fill="#b5b5b5" />
        </Svg>
      </div>
    </section>
  )
}

const eventButtons: { name: string; disabled?: boolean }[] = [
  { name: "新增服务(S)" },
  { name: "新增操作(N)" },
  { name: "修改(E)" },
  { name: "删除(D)" },
  { name: "上移(U)", disabled: true },
  { name: "下移(W)", disabled: true },
  { name: "确定(O)" },
  { name: "取消(C)" },
]

function UpdateEventDialog() {
  return (
    <section role="dialog" aria-label="元素的值更新事件设置" className="absolute left-[920px] top-[355px] w-[635px] h-[565px] flex flex-col px-[6px] pb-[6px] bg-[#ebebeb] border border-[#b4b4b4]">
      <div className="h-[30px] shrink-0 flex items-center pl-[3px]">
        <AppLogo />
        <h2 className="flex-1 ml-[4px] text-[15px] text-[#8f8f8f]">元素的值更新事件设置</h2>
        <CloseButton className="h-[17px] mb-[2px] mr-[2px]" />
      </div>
      <div className="flex-1 flex bg-white border border-[#d5d5d5] pt-[11px] pb-[7px] pl-[10px] pr-[9px]">
        <div className="flex-1 border border-[#606060]" />
        <div className="w-24 ml-2 flex flex-col gap-3">
          {eventButtons.map((b) => (
            <PushButton
              key={b.name}
              disabled={b.disabled}
              className={clsx("h-[30px]", b.name === "确定(O)" && "mt-1", b.name === "新增服务(S)" && "border-b-4 border-b-[#3b8ef0]")}
            >
              {b.name}
            </PushButton>
          ))}
        </div>
      </div>
    </section>
  )
}

/* ---------- red marks over everything ---------- */

function Marks() {
  const box = "absolute border-3 border-[#ff0000]"
  return (
    <div className="absolute inset-0 overflow-hidden pointer-events-none">
      <div className={clsx(box, "left-[556px] top-[219px] w-[300px] h-[24px]")} />
      <div className={clsx(box, "left-[220px] top-[324px] w-[284px] h-[23px]")} />
      <div className={clsx(box, "left-[192px] top-[607px] w-[245px] h-[21px]")} />
      <div className={clsx(box, "left-[1442px] top-[397px] w-[98px] h-[33px]")} />
      <div className={clsx(box, "left-[1576px] top-[801px] w-[301px] h-[22px]")} />
      <svg width="1898" height="996" className="absolute left-0 top-0" fill="#ff0000">
        <path d="M1274 438L733.500 398.500V394L715 401.500 733 411.500V407z" />
        <path d="M516.500 421L483.500 544 478 542.500 482.500 562.500 495.500 546.500 491.500 545.500z" />
        <path d="M1540 272L1701 616 1698 618 1714 630.500 1713 610 1709.500 612z" />
        <path d="M1596 687L1483.500 525.500 1479 527.500 1475.500 507 1493 517.500 1490 521z" />
      </svg>
    </div>
  )
}

export default function App() {
  return (
    <div className="relative h-screen flex flex-col overflow-hidden bg-white text-[12px] leading-4 text-[#333] font-['Noto_Sans','Noto_Sans_CJK_SC',sans-serif]">
      <TitleBar />
      <nav className="h-6 shrink-0 flex items-center gap-[19px] -ml-[9px] whitespace-nowrap">
        {menus.map((m) => <button key={m}>{m}</button>)}
      </nav>
      <MainToolbar />
      <div className="flex-1 min-h-0 flex gap-[3px] pr-[2px]">
        <Toolbox />
        <Designer />
        <div className="w-[338px] shrink-0 mt-[2px] flex flex-col">
          <ProjectDock />
          <PropertyDock />
        </div>
      </div>
      <footer className="h-5 shrink-0 -ml-4 pt-[14px] overflow-hidden">就绪</footer>
      <ServiceEditDialog />
      <UpdateEventDialog />
      <Marks />
    </div>
  )
}
